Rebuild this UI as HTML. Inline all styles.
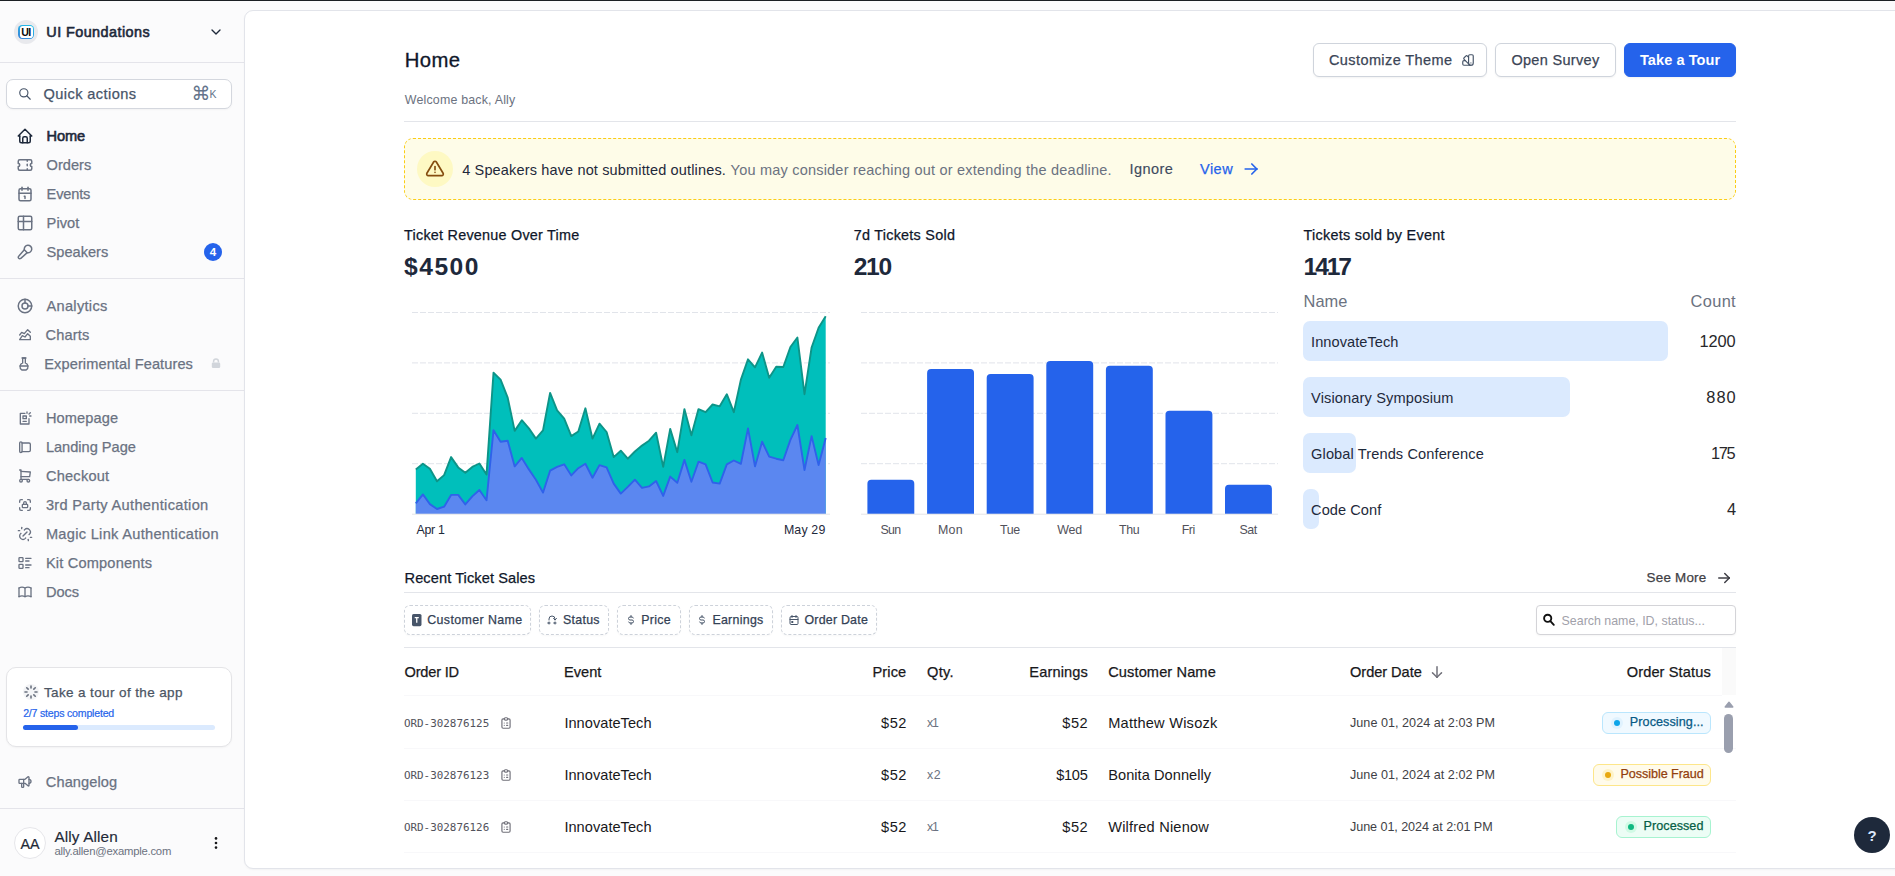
<!DOCTYPE html>
<html lang="en">
<head>
<meta charset="utf-8">
<title>Home · UI Foundations</title>
<style>
*{box-sizing:border-box;margin:0;padding:0}
html,body{width:1895px;height:876px;overflow:hidden}
body{position:relative;background:#fbfbfc;font-family:"Liberation Sans",Arial,sans-serif;color:#1e293b;font-size:14.5px;-webkit-font-smoothing:antialiased}
.topline{position:absolute;left:0;top:0;width:1895px;height:1px;background:#1b1f24;z-index:9}
.abs,.t{position:absolute;white-space:nowrap}
.t{line-height:20px;height:20px}
svg{display:block;overflow:visible}
.ico{position:absolute;fill:none;stroke:currentColor;stroke-linecap:round;stroke-linejoin:round}
/* sidebar */
.side{color:#64748b}
.hr{position:absolute;left:0;width:244px;height:1px;background:#e4e4ea}
.nav{font-size:14.6px;color:#6a7282;-webkit-text-stroke:0.25px currentColor}
.nav.on{color:#1e293b;-webkit-text-stroke:0.6px currentColor}
.card{position:absolute;left:244px;top:10px;width:1660px;height:859px;background:#fff;border:1px solid #e2e4ea;border-radius:9px 0 0 9px;box-shadow:0 1px 2px rgba(0,0,0,.04)}
.m{-webkit-text-stroke:0.25px currentColor}
.btn{position:absolute;top:43px;height:34px;border:1px solid #cfd4dc;border-radius:6px;background:#fff;box-shadow:0 1px 2px rgba(0,0,0,.05)}
.line{position:absolute;left:404px;width:1332px;height:1px;background:#e3e5ea}
.ax{font-size:12.4px;color:#1e293b}
.ax.g{color:#52525b}
.ev{left:1303px;height:40px;border-radius:7px;background:#dbeafe}
.en{left:1311.1px;font-size:14.6px;color:#1e293b}
.ec{font-size:16.4px;color:#27272a}
.chip{position:absolute;top:605px;height:30px;border:1px dashed #cdd2da;border-radius:6px;background:#fff;box-shadow:0 1px 2px rgba(0,0,0,.03)}
.ct{top:610px;font-size:12.4px;color:#334155}
.th{top:662px;font-size:14.6px;color:#18181b}
.oid{left:403.9px;font-family:"DejaVu Sans Mono","Liberation Mono",monospace;font-size:10.9px;color:#52525b}
.td{font-size:14.6px;color:#18181b}
.pr{font-size:14.6px}
.qt{left:927.1px;font-size:12.4px;color:#6b7280}
.dt{left:1350px;font-size:12.6px;color:#3f3f46}
.bdg{position:absolute;height:22px;border:1px solid;border-radius:6px}
.dot{width:6px;height:6px;border-radius:50%}
.halo{width:12px;height:12px;border-radius:50%}
.bt{font-size:12.6px;line-height:22px;height:22px}
</style>
</head>
<body>
<div class="topline"></div>
<aside class="side">
  <div class="abs" style="left:14px;top:20px;width:24px;height:24px;border-radius:50%;background:#e8e9ed"></div>
  <div class="abs" style="left:18.2px;top:24.8px;width:16px;height:14.4px;border-radius:4.2px;background:linear-gradient(205deg,#1fc4ea,#3a80d8)"></div>
  <div class="abs" style="left:19.7px;top:26.3px;width:13px;height:11.4px;border-radius:2.8px;background:#fff"></div>
  <div class="t" style="left:18.2px;top:22px;width:16px;text-align:center;font-size:10.6px;font-weight:700;color:#0a0a0a;letter-spacing:-0.6px;text-indent:-0.6px">UI</div>
  <div class="t" style="left:46.3px;top:22.1px;font-size:14.4px;color:#1e293b;-webkit-text-stroke:0.6px currentColor"><span style="letter-spacing:0.44px;margin-right:-0.44px">UI Foundations</span></div>
  <svg class="ico" style="left:208px;top:24px;color:#1e293b" width="16" height="16" viewBox="0 0 24 24" stroke-width="2"><path d="M6 9l6 6l6 -6"/></svg>
  <div class="hr" style="top:62px"></div>

  <div class="abs" style="left:6px;top:79px;width:226px;height:30px;border:1px solid #d4d7de;border-radius:7px;background:#fff;box-shadow:0 1px 2px rgba(0,0,0,.04)"></div>
  <svg class="ico" style="left:17.5px;top:86.8px;color:#475569" width="14" height="14" viewBox="0 0 24 24" stroke-width="2"><path d="M3 10a7 7 0 1 0 14 0a7 7 0 1 0 -14 0"/><path d="M21 21l-6 -6"/></svg>
  <div class="t m" style="left:43.6px;top:84px;font-size:14.6px;color:#475569"><span style="letter-spacing:0.4px;margin-right:-0.4px">Quick actions</span></div>
  <div class="t" style="left:191.5px;top:82.5px;font-size:19px;color:#64748b;font-family:'DejaVu Sans',sans-serif">⌘</div>
  <div class="t" style="left:209.6px;top:84px;font-size:10.5px;color:#64748b">K</div>

  <nav>

  <svg class="ico" style="left:16px;top:127px;color:#1e293b" width="18" height="18" viewBox="0 0 24 24" stroke-width="2"><path d="M5 12l-2 0l9 -9l9 9l-2 0"/><path d="M5 12v7a2 2 0 0 0 2 2h10a2 2 0 0 0 2 -2v-7"/><path d="M9 21v-6a2 2 0 0 1 2 -2h2a2 2 0 0 1 2 2v6"/></svg>
  <svg class="ico" style="left:16px;top:156px;color:#6a7282" width="18" height="18" viewBox="0 0 24 24" stroke-width="2"><path d="M15 5l0 2"/><path d="M15 11l0 2"/><path d="M15 17l0 2"/><path d="M5 5h14a2 2 0 0 1 2 2v3a2 2 0 0 0 0 4v3a2 2 0 0 1 -2 2h-14a2 2 0 0 1 -2 -2v-3a2 2 0 0 0 0 -4v-3a2 2 0 0 1 2 -2"/></svg>
  <svg class="ico" style="left:16px;top:185px;color:#6a7282" width="18" height="18" viewBox="0 0 24 24" stroke-width="2"><path d="M4 7a2 2 0 0 1 2 -2h12a2 2 0 0 1 2 2v12a2 2 0 0 1 -2 2h-12a2 2 0 0 1 -2 -2z"/><path d="M16 3v4"/><path d="M8 3v4"/><path d="M4 11h16"/><path d="M11 15h1v3"/></svg>
  <svg class="ico" style="left:16px;top:214px;color:#6a7282" width="18" height="18" viewBox="0 0 24 24" stroke-width="2"><path d="M3 5a2 2 0 0 1 2 -2h14a2 2 0 0 1 2 2v14a2 2 0 0 1 -2 2h-14a2 2 0 0 1 -2 -2v-14z"/><path d="M3 10h18"/><path d="M10 3v18"/></svg>
  <svg class="ico" style="left:16px;top:243px;color:#6a7282" width="18" height="18" viewBox="0 0 24 24" stroke-width="2"><path d="M15 12.9a5 5 0 1 0 -3.902 -3.9"/><path d="M15 12.9l-3.902 -3.899l-7.513 8.584a2 2 0 1 0 2.827 2.83l8.588 -7.515z"/></svg>
  <svg class="ico" style="left:16px;top:297px;color:#6a7282" width="18" height="18" viewBox="0 0 24 24" stroke-width="2"><path d="M12 3v5m4 4h5"/><path d="M8 12a4 4 0 1 0 8 0a4 4 0 1 0 -8 0"/><path d="M3 12a9 9 0 1 0 18 0a9 9 0 1 0 -18 0"/></svg>
  <svg class="ico" style="left:17px;top:327px;color:#6a7282" width="16" height="16" viewBox="0 0 24 24" stroke-width="2"><path d="M4 19l4 -6l4 2l4 -5l4 4l0 5l-16 0"/><path d="M4 12l3 -4l4 2l5 -6l4 4"/></svg>
  <svg class="ico" style="left:16px;top:356px;color:#6a7282" width="16" height="16" viewBox="0 0 24 24" stroke-width="2"><path d="M6.1 15h11.8"/><path d="M14 3v7.342a6 6 0 0 1 1.318 10.658h-6.635a6 6 0 0 1 1.317 -10.66v-7.34h4z"/><path d="M9 3h6"/></svg>
  <svg class="abs" style="left:211px;top:358.1px" width="10" height="11" viewBox="0 0 10 11"><path d="M2.6 4.6V3.3a2.4 2.4 0 0 1 4.8 0v1.3" fill="none" stroke="#d1d5db" stroke-width="1.5"/><rect x="0.8" y="4.4" width="8.4" height="5.6" rx="1.3" fill="#d1d5db"/></svg>
  <svg class="ico" style="left:17px;top:410px;color:#6a7282" width="16" height="16" viewBox="0 0 24 24" stroke-width="2"><path d="M11.933 5h-6.933v16h13v-8"/><path d="M14 17h-5"/><path d="M9 13h5v-4h-5z"/><path d="M15 5v-2"/><path d="M18 6l2 -2"/><path d="M19 9h2"/></svg>
  <svg class="ico" style="left:17px;top:439px;color:#6a7282" width="16" height="16" viewBox="0 0 24 24" stroke-width="2"><path d="M4 6a1.8 1.8 0 0 1 3.6 0v12.5a1.8 1.8 0 0 1 -3.6 0z"/><path d="M7.6 6h10.4a2 2 0 0 1 2 2v9a2 2 0 0 1 -2 2h-10.4"/></svg>
  <svg class="ico" style="left:17px;top:468px;color:#6a7282" width="16" height="16" viewBox="0 0 24 24" stroke-width="2"><path d="M4 19a2 2 0 1 0 4 0a2 2 0 1 0 -4 0"/><path d="M15 19a2 2 0 1 0 4 0a2 2 0 1 0 -4 0"/><path d="M17 17h-11v-14h-2"/><path d="M6 5l14 1l-1 7h-13"/></svg>
  <svg class="ico" style="left:17px;top:497px;color:#6a7282" width="16" height="16" viewBox="0 0 24 24" stroke-width="2"><path d="M4 8v-2a2 2 0 0 1 2 -2h2"/><path d="M4 16v2a2 2 0 0 0 2 2h2"/><path d="M16 4h2a2 2 0 0 1 2 2v2"/><path d="M16 20h2a2 2 0 0 0 2 -2v-2"/><path d="M8 12a1 1 0 0 1 1 -1h6a1 1 0 0 1 1 1v3a1 1 0 0 1 -1 1h-6a1 1 0 0 1 -1 -1z"/><path d="M10 11v-2a2 2 0 1 1 4 0v2"/></svg>
  <svg class="ico" style="left:17px;top:526px;color:#6a7282" width="16" height="16" viewBox="0 0 24 24" stroke-width="2"><path d="M17 22v-2"/><path d="M9 15l6 -6"/><path d="M11 6l.463 -.536a5 5 0 0 1 7.071 7.072l-.534 .464"/><path d="M13 18l-.397 .534a5.068 5.068 0 0 1 -7.127 0a4.972 4.972 0 0 1 0 -7.071l.524 -.463"/><path d="M20 17h2"/><path d="M2 7h2"/><path d="M7 2v2"/></svg>
  <svg class="ico" style="left:17px;top:555px;color:#6a7282" width="16" height="16" viewBox="0 0 24 24" stroke-width="2"><path d="M13 5h8"/><path d="M13 9h5"/><path d="M13 15h8"/><path d="M13 19h5"/><path d="M3 5a1 1 0 0 1 1 -1h4a1 1 0 0 1 1 1v4a1 1 0 0 1 -1 1h-4a1 1 0 0 1 -1 -1z"/><path d="M3 15a1 1 0 0 1 1 -1h4a1 1 0 0 1 1 1v4a1 1 0 0 1 -1 1h-4a1 1 0 0 1 -1 -1z"/></svg>
  <svg class="ico" style="left:17px;top:584px;color:#6a7282" width="16" height="16" viewBox="0 0 24 24" stroke-width="2"><path d="M3 19a9 9 0 0 1 9 0a9 9 0 0 1 9 0"/><path d="M3 6a9 9 0 0 1 9 0a9 9 0 0 1 9 0"/><path d="M3 6l0 13"/><path d="M12 6l0 13"/><path d="M21 6l0 13"/></svg>
  <div class="t nav on" style="left:46.6px;top:126px"><span style="letter-spacing:-0.15px;margin-right:0.15px">Home</span></div>
  <div class="t nav" style="left:46.6px;top:155px"><span style="letter-spacing:0.02px;margin-right:-0.02px">Orders</span></div>
  <div class="t nav" style="left:46.6px;top:184px"><span style="letter-spacing:-0.17px;margin-right:0.17px">Events</span></div>
  <div class="t nav" style="left:46.6px;top:213px"><span style="letter-spacing:0.06px;margin-right:-0.06px">Pivot</span></div>
  <div class="t nav" style="left:46.6px;top:242px"><span style="letter-spacing:-0.01px;margin-right:0.01px">Speakers</span></div>
  <div class="abs" style="left:204px;top:243px;width:18px;height:18px;border-radius:50%;background:#2563eb"></div>
  <div class="t" style="left:204px;top:242px;width:18px;text-align:center;font-size:11.5px;font-weight:700;color:#fff">4</div>
  <div class="hr" style="top:278px"></div>
  <div class="t nav" style="left:46.5px;top:296px"><span style="letter-spacing:0.3px;margin-right:-0.3px">Analytics</span></div>
  <div class="t nav" style="left:45.6px;top:325px"><span style="letter-spacing:0.12px;margin-right:-0.12px">Charts</span></div>
  <div class="t nav" style="left:44.3px;top:354px"><span style="letter-spacing:0.09px;margin-right:-0.09px">Experimental Features</span></div>
  <div class="hr" style="top:390px"></div>
  <div class="t nav" style="left:45.9px;top:408px"><span style="letter-spacing:0.11px;margin-right:-0.11px">Homepage</span></div>
  <div class="t nav" style="left:45.9px;top:437px"><span style="letter-spacing:-0.01px;margin-right:0.01px">Landing Page</span></div>
  <div class="t nav" style="left:45.9px;top:466px"><span style="letter-spacing:0.23px;margin-right:-0.23px">Checkout</span></div>
  <div class="t nav" style="left:45.9px;top:495px"><span style="letter-spacing:0.32px;margin-right:-0.32px">3rd Party Authentication</span></div>
  <div class="t nav" style="left:45.9px;top:524px"><span style="letter-spacing:0.3px;margin-right:-0.3px">Magic Link Authentication</span></div>
  <div class="t nav" style="left:45.9px;top:553px"><span style="letter-spacing:0.18px;margin-right:-0.18px">Kit Components</span></div>
  <div class="t nav" style="left:45.9px;top:582px"><span style="letter-spacing:-0.02px;margin-right:0.02px">Docs</span></div>
  </nav>

  <div class="abs" style="left:6px;top:667px;width:226px;height:80px;border:1px solid #e4e4e7;border-radius:10px;background:#fff;box-shadow:0 1px 2px rgba(0,0,0,.04)"></div>
  <div class="abs" style="left:22.5px;top:683.5px;width:16.5px;height:16.5px;border-radius:50%;background:#f3f4f6"></div>
  <svg class="ico" style="left:22.9px;top:683.8px;color:#6b7280" width="16" height="16" viewBox="0 0 24 24" stroke-width="2.4"><path d="M12 6l0 -3"/><path d="M16.25 7.75l2.15 -2.15"/><path d="M18 12l3 0"/><path d="M16.25 16.25l2.15 2.15"/><path d="M12 18l0 3"/><path d="M7.75 16.25l-2.15 2.15"/><path d="M6 12l-3 0"/><path d="M7.75 7.75l-2.15 -2.15"/></svg>
  <div class="t m" style="left:43.9px;top:682.8px;font-size:13.5px;color:#4b5563"><span style="letter-spacing:0.38px;margin-right:-0.38px">Take a tour of the app</span></div>
  <div class="t" style="left:23.2px;top:703px;font-size:10.6px;color:#2563eb;-webkit-text-stroke:0.2px #2563eb"><span style="letter-spacing:-0.21px;margin-right:0.21px">2/7 steps completed</span></div>
  <div class="abs" style="left:23px;top:725px;width:192px;height:5px;border-radius:3px;background:#dbeafe"></div>
  <div class="abs" style="left:23px;top:725px;width:55px;height:5px;border-radius:3px;background:#2563eb"></div>

  <svg class="ico" style="left:17px;top:774px;color:#6a7282" width="16" height="16" viewBox="0 0 24 24" stroke-width="2"><path d="M18 8a3 3 0 0 1 0 6"/><path d="M10 8v11a1 1 0 0 1 -1 1h-1a1 1 0 0 1 -1 -1v-5"/><path d="M12 8h0l4.524 -3.77a.9 .9 0 0 1 1.476 .692v12.156a.9 .9 0 0 1 -1.476 .692l-4.524 -3.77h-8a1 1 0 0 1 -1 -1v-4a1 1 0 0 1 1 -1h8"/></svg>
  <div class="t nav" style="left:45.8px;top:772px"><span style="letter-spacing:0.1px;margin-right:-0.1px">Changelog</span></div>
  <div class="hr" style="top:808px"></div>
  <div class="abs" style="left:14px;top:827px;width:32px;height:32px;border-radius:50%;border:1px solid #e6e6ea;background:#fff"></div>
  <div class="t" style="left:14px;top:833.7px;width:32px;text-align:center;font-size:14.3px;color:#1f2937;-webkit-text-stroke:0.2px #1f2937">AA</div>
  <div class="t" style="left:54.4px;top:827px;font-size:15.3px;color:#1f2937;-webkit-text-stroke:0.15px #1f2937"><span style="letter-spacing:0.14px;margin-right:-0.14px">Ally Allen</span></div>
  <div class="t" style="left:54.4px;top:841.3px;font-size:11.3px;color:#6b7280"><span style="letter-spacing:-0.23px;margin-right:0.23px">ally.allen@example.com</span></div>
  <svg class="abs" style="left:213px;top:836px" width="6" height="14" viewBox="0 0 6 14" fill="#18181b"><circle cx="3" cy="2.4" r="1.3"/><circle cx="3" cy="7" r="1.3"/><circle cx="3" cy="11.6" r="1.3"/></svg>
</aside>

<div class="card"></div>
<main>
<header>
  <h1 class="t" style="left:404.8px;top:45.6px;font-size:20.3px;font-weight:400;line-height:28px;height:28px;color:#0f172a;-webkit-text-stroke:0.3px currentColor"><span style="letter-spacing:0.36px;margin-right:-0.36px">Home</span></h1>
  <p class="t" style="left:404.8px;top:90px;font-size:12.4px;color:#6b7280"><span style="letter-spacing:0.19px;margin-right:-0.19px">Welcome back, Ally</span></p>
  <div class="btn" style="left:1313px;width:174px"></div>
  <div class="t m" style="left:1329px;top:50px;color:#3b4556"><span style="letter-spacing:0.4px;margin-right:-0.4px">Customize Theme</span></div>
  <svg class="ico" style="left:1461px;top:52.5px;color:#475569" width="14" height="14" viewBox="0 0 24 24" stroke-width="2"><path d="M19 3h-4a2 2 0 0 0 -2 2v12a4 4 0 0 0 8 0v-12a2 2 0 0 0 -2 -2"/><path d="M13 7.35l-2 -2a2 2 0 0 0 -2.828 0l-2.828 2.828a2 2 0 0 0 0 2.828l9 9"/><path d="M7.3 13h-2.3a2 2 0 0 0 -2 2v4a2 2 0 0 0 2 2h12"/><path d="M17 17l0 .01"/></svg>
  <div class="btn" style="left:1495px;width:121px"></div>
  <div class="t m" style="left:1511.4px;top:50px;color:#3b4556"><span style="letter-spacing:0.32px;margin-right:-0.32px">Open Survey</span></div>
  <div class="btn" style="left:1624px;width:112px;background:#2563eb;border-color:#2563eb"></div>
  <div class="t" style="left:1640px;top:50px;color:#fff;font-weight:700"><span style="letter-spacing:0.08px;margin-right:-0.08px">Take a Tour</span></div>
  <div class="line" style="top:121px"></div>
</header>
<section>
  <div class="abs" style="left:404px;top:138px;width:1332px;height:62px;border-radius:9px;background:#fefce8;border:1px dashed #facc15"></div>
  <div class="abs" style="left:417px;top:151px;width:36px;height:36px;border-radius:50%;background:#fef9c3"></div>
  <svg class="ico" style="left:425px;top:159px;color:#854d0e" width="20" height="20" viewBox="0 0 24 24" stroke-width="2"><path d="M12 9v4"/><path d="M10.363 3.591l-8.106 13.534a1.914 1.914 0 0 0 1.636 2.871h16.214a1.914 1.914 0 0 0 1.636 -2.87l-8.106 -13.536a1.914 1.914 0 0 0 -3.274 0z"/><path d="M12 16h.01"/></svg>
  <div class="t" style="left:462.2px;top:159.5px;color:#1e293b"><span style="letter-spacing:0.15px;margin-right:-0.15px">4 Speakers have not submitted outlines.</span></div>
  <div class="t" style="left:730.6px;top:159.5px;color:#6b7280"><span style="letter-spacing:0.21px;margin-right:-0.21px">You may consider reaching out or extending the deadline.</span></div>
  <div class="t" style="left:1129.5px;top:159px;color:#3f4b5e;-webkit-text-stroke:0.15px #3f4b5e"><span style="letter-spacing:0.42px;margin-right:-0.42px">Ignore</span></div>
  <div class="t m" style="left:1200px;top:159px;color:#2563eb"><span style="letter-spacing:0.48px;margin-right:-0.48px">View</span></div>
  <svg class="ico" style="left:1241.1px;top:159px;color:#2563eb" width="20" height="20" viewBox="0 0 24 24" stroke-width="2"><path d="M5 12l14 0"/><path d="M13 18l6 -6"/><path d="M13 6l6 6"/></svg>
</section>

<section>
  <h2 class="t m" style="left:404.1px;top:224.7px;font-weight:400;font-size:14.4px;color:#0f172a"><span style="letter-spacing:0.23px;margin-right:-0.23px">Ticket Revenue Over Time</span></h2>
  <div class="t" style="left:404.1px;top:251px;line-height:32px;height:32px;font-size:24.6px;font-weight:700;color:#1e293b"><span style="letter-spacing:1.48px;margin-right:-1.48px">$4500</span></div>
  <section>
<svg class="abs" style="left:404px;top:300px" width="440" height="225" viewBox="404 300 440 225">
<line x1="412" y1="312.5" x2="830" y2="312.5" stroke="#e1e4ea" stroke-width="1" stroke-dasharray="6 2"/>
<line x1="412" y1="362.9" x2="830" y2="362.9" stroke="#e1e4ea" stroke-width="1" stroke-dasharray="6 2"/>
<line x1="412" y1="413.3" x2="830" y2="413.3" stroke="#e1e4ea" stroke-width="1" stroke-dasharray="6 2"/>
<line x1="412" y1="463.7" x2="830" y2="463.7" stroke="#e1e4ea" stroke-width="1" stroke-dasharray="6 2"/>
<path d="M415.8 469.4 L422.9 463.8 L429.9 468.7 L437.0 481.3 L444.1 475.1 L451.1 457.1 L458.2 467.4 L465.3 472.8 L472.3 466.9 L479.4 463.5 L486.5 474.6 L493.5 372.7 L500.6 379.6 L507.7 397.6 L514.7 430.9 L521.8 420.2 L528.9 428.4 L535.9 438.6 L543.0 430.4 L550.1 392.9 L557.1 410.4 L564.2 418.6 L571.3 436.1 L578.3 431.5 L585.4 408.3 L592.5 438.6 L599.5 423.7 L606.6 432.0 L613.7 457.1 L620.8 450.7 L627.8 458.7 L634.9 451.5 L642.0 445.6 L649.0 440.7 L656.1 432.7 L663.2 466.9 L670.2 428.9 L677.3 452.2 L684.4 409.1 L691.4 435.3 L698.5 409.1 L705.6 412.2 L712.6 404.5 L719.7 406.3 L726.8 394.2 L733.8 412.2 L740.9 379.6 L748.0 359.3 L755.0 367.3 L762.1 352.6 L769.2 377.8 L776.2 366.8 L783.3 367.0 L790.4 347.0 L797.4 337.5 L804.5 394.2 L811.6 347.5 L818.6 327.7 L825.7 316.2 L825.7 514 L415.8 514 Z" fill="#00bfbb"/>
<path d="M415.8 469.4 L422.9 463.8 L429.9 468.7 L437.0 481.3 L444.1 475.1 L451.1 457.1 L458.2 467.4 L465.3 472.8 L472.3 466.9 L479.4 463.5 L486.5 474.6 L493.5 372.7 L500.6 379.6 L507.7 397.6 L514.7 430.9 L521.8 420.2 L528.9 428.4 L535.9 438.6 L543.0 430.4 L550.1 392.9 L557.1 410.4 L564.2 418.6 L571.3 436.1 L578.3 431.5 L585.4 408.3 L592.5 438.6 L599.5 423.7 L606.6 432.0 L613.7 457.1 L620.8 450.7 L627.8 458.7 L634.9 451.5 L642.0 445.6 L649.0 440.7 L656.1 432.7 L663.2 466.9 L670.2 428.9 L677.3 452.2 L684.4 409.1 L691.4 435.3 L698.5 409.1 L705.6 412.2 L712.6 404.5 L719.7 406.3 L726.8 394.2 L733.8 412.2 L740.9 379.6 L748.0 359.3 L755.0 367.3 L762.1 352.6 L769.2 377.8 L776.2 366.8 L783.3 367.0 L790.4 347.0 L797.4 337.5 L804.5 394.2 L811.6 347.5 L818.6 327.7 L825.7 316.2" fill="none" stroke="#0d9488" stroke-width="1.9" stroke-linejoin="round"/>
<path d="M415.8 503.3 L422.9 494.4 L429.9 504.1 L437.0 509.0 L444.1 506.7 L451.1 494.9 L458.2 494.9 L465.3 504.4 L472.3 496.4 L479.4 490.0 L486.5 500.3 L493.5 430.2 L500.6 441.7 L507.7 440.7 L514.7 466.4 L521.8 457.9 L528.9 469.4 L535.9 479.7 L543.0 492.6 L550.1 470.7 L557.1 466.9 L564.2 464.3 L571.3 475.4 L578.3 468.2 L585.4 463.8 L592.5 477.7 L599.5 465.1 L606.6 467.4 L613.7 483.6 L620.8 493.6 L627.8 486.9 L634.9 479.7 L642.0 487.9 L649.0 486.4 L656.1 481.0 L663.2 495.9 L670.2 476.6 L677.3 482.8 L684.4 459.9 L691.4 481.8 L698.5 461.7 L705.6 464.3 L712.6 482.5 L719.7 483.6 L726.8 464.3 L733.8 460.5 L740.9 463.8 L748.0 428.4 L755.0 466.4 L762.1 441.7 L769.2 456.6 L776.2 458.7 L783.3 460.2 L790.4 439.9 L797.4 425.0 L804.5 470.0 L811.6 436.1 L818.6 465.1 L825.7 438.1 L825.7 514 L415.8 514 Z" fill="#5b87f0"/>
<path d="M415.8 503.3 L422.9 494.4 L429.9 504.1 L437.0 509.0 L444.1 506.7 L451.1 494.9 L458.2 494.9 L465.3 504.4 L472.3 496.4 L479.4 490.0 L486.5 500.3 L493.5 430.2 L500.6 441.7 L507.7 440.7 L514.7 466.4 L521.8 457.9 L528.9 469.4 L535.9 479.7 L543.0 492.6 L550.1 470.7 L557.1 466.9 L564.2 464.3 L571.3 475.4 L578.3 468.2 L585.4 463.8 L592.5 477.7 L599.5 465.1 L606.6 467.4 L613.7 483.6 L620.8 493.6 L627.8 486.9 L634.9 479.7 L642.0 487.9 L649.0 486.4 L656.1 481.0 L663.2 495.9 L670.2 476.6 L677.3 482.8 L684.4 459.9 L691.4 481.8 L698.5 461.7 L705.6 464.3 L712.6 482.5 L719.7 483.6 L726.8 464.3 L733.8 460.5 L740.9 463.8 L748.0 428.4 L755.0 466.4 L762.1 441.7 L769.2 456.6 L776.2 458.7 L783.3 460.2 L790.4 439.9 L797.4 425.0 L804.5 470.0 L811.6 436.1 L818.6 465.1 L825.7 438.1" fill="none" stroke="#2f62ea" stroke-width="1.9" stroke-linejoin="round"/>
<line x1="412" y1="514.2" x2="830" y2="514.2" stroke="#e4e4e7" stroke-width="1"/>
</svg>
</section>
  <div class="t ax" style="left:416.4px;top:520px"><span style="letter-spacing:-0.28px;margin-right:0.28px">Apr 1</span></div>
  <div class="t ax" style="left:783.9px;top:520px"><span style="letter-spacing:0.15px;margin-right:-0.15px">May 29</span></div>
</section>
<section>
  <h2 class="t m" style="left:853.7px;top:224.7px;font-weight:400;font-size:14.4px;color:#0f172a"><span style="letter-spacing:0.26px;margin-right:-0.26px">7d Tickets Sold</span></h2>
  <div class="t" style="left:853.7px;top:251px;line-height:32px;height:32px;font-size:24.6px;font-weight:700;color:#1e293b"><span style="letter-spacing:-1.27px;margin-right:1.27px">210</span></div>
  <section>
<svg class="abs" style="left:853px;top:300px" width="440" height="225" viewBox="853 300 440 225">
<line x1="861" y1="312.5" x2="1278" y2="312.5" stroke="#e1e4ea" stroke-width="1" stroke-dasharray="6 2"/>
<line x1="861" y1="362.9" x2="1278" y2="362.9" stroke="#e1e4ea" stroke-width="1" stroke-dasharray="6 2"/>
<line x1="861" y1="413.3" x2="1278" y2="413.3" stroke="#e1e4ea" stroke-width="1" stroke-dasharray="6 2"/>
<line x1="861" y1="463.7" x2="1278" y2="463.7" stroke="#e1e4ea" stroke-width="1" stroke-dasharray="6 2"/>
<path d="M867.4 514 V483.8 a4 4 0 0 1 4 -4 h38.9 a4 4 0 0 1 4 4 V514 Z" fill="#2563eb"/>
<path d="M927.1 514 V372.9 a4 4 0 0 1 4 -4 h38.9 a4 4 0 0 1 4 4 V514 Z" fill="#2563eb"/>
<path d="M986.7 514 V377.9 a4 4 0 0 1 4 -4 h38.9 a4 4 0 0 1 4 4 V514 Z" fill="#2563eb"/>
<path d="M1046.3 514 V365.1 a4 4 0 0 1 4 -4 h38.9 a4 4 0 0 1 4 4 V514 Z" fill="#2563eb"/>
<path d="M1105.9 514 V369.7 a4 4 0 0 1 4 -4 h38.9 a4 4 0 0 1 4 4 V514 Z" fill="#2563eb"/>
<path d="M1165.5 514 V414.8 a4 4 0 0 1 4 -4 h38.9 a4 4 0 0 1 4 4 V514 Z" fill="#2563eb"/>
<path d="M1225.0 514 V488.8 a4 4 0 0 1 4 -4 h38.9 a4 4 0 0 1 4 4 V514 Z" fill="#2563eb"/>
<line x1="861" y1="514.2" x2="1278" y2="514.2" stroke="#e4e4e7" stroke-width="1"/>
</svg>
</section>
  <div class="t ax g" style="left:880.5px;top:520px"><span style="letter-spacing:-0.67px;margin-right:0.67px">Sun</span></div>
  <div class="t ax g" style="left:938.1px;top:520px"><span style="letter-spacing:0.2px;margin-right:-0.2px">Mon</span></div>
  <div class="t ax g" style="left:1000.1px;top:520px"><span style="letter-spacing:-0.4px;margin-right:0.4px">Tue</span></div>
  <div class="t ax g" style="left:1057.2px;top:520px"><span style="letter-spacing:-0.13px;margin-right:0.13px">Wed</span></div>
  <div class="t ax g" style="left:1118.9px;top:520px"><span style="letter-spacing:-0.33px;margin-right:0.33px">Thu</span></div>
  <div class="t ax g" style="left:1181.8px;top:520px"><span style="letter-spacing:-0.53px;margin-right:0.53px">Fri</span></div>
  <div class="t ax g" style="left:1239.4px;top:520px"><span style="letter-spacing:-0.4px;margin-right:0.4px">Sat</span></div>
</section>
<section>
  <h2 class="t m" style="left:1303.6px;top:224.7px;font-weight:400;font-size:14.4px;color:#0f172a"><span style="letter-spacing:0.27px;margin-right:-0.27px">Tickets sold by Event</span></h2>
  <div class="t" style="left:1303.6px;top:251px;line-height:32px;height:32px;font-size:24.6px;font-weight:700;color:#1e293b"><span style="letter-spacing:-2.1px">1417</span></div>
  <div class="t" style="left:1303.6px;top:291px;font-size:16.4px;color:#6b7280"><span style="letter-spacing:-0.01px;margin-right:0.01px">Name</span></div>
  <div class="t" style="left:1690.5px;top:291px;font-size:16.4px;color:#6b7280"><span style="letter-spacing:0.36px;margin-right:-0.36px">Count</span></div>
  <div class="abs ev" style="top:321px;width:365px"></div>
  <div class="abs ev" style="top:377px;width:267px"></div>
  <div class="abs ev" style="top:433px;width:53px"></div>
  <div class="abs ev" style="top:489px;width:16px"></div>
  <div class="t en" style="top:332px"><span style="letter-spacing:0.05px;margin-right:-0.05px">InnovateTech</span></div>
  <div class="t en" style="top:388px"><span style="letter-spacing:0.13px;margin-right:-0.13px">Visionary Symposium</span></div>
  <div class="t en" style="top:444px"><span style="letter-spacing:0.1px;margin-right:-0.1px">Global Trends Conference</span></div>
  <div class="t en" style="top:500px"><span style="letter-spacing:0.04px;margin-right:-0.04px">Code Conf</span></div>
  <div class="t ec" style="left:1699.6px;top:331.2px"><span style="letter-spacing:-0.12px;margin-right:0.12px">1200</span></div>
  <div class="t ec" style="left:1706.3px;top:387.2px"><span style="letter-spacing:1.02px;margin-right:-1.02px">880</span></div>
  <div class="t ec" style="left:1710.9px;top:443.2px"><span style="letter-spacing:-1.28px;margin-right:1.28px">175</span></div>
  <div class="t ec" style="left:1727px;top:499.2px">4</div>
</section>

<section>
  <h2 class="t m" style="left:404.5px;top:568px;font-weight:400;font-size:14.6px;color:#0f172a"><span style="letter-spacing:0.09px;margin-right:-0.09px">Recent Ticket Sales</span></h2>
  <div class="t m" style="left:1646.6px;top:567.5px;font-size:13.4px;color:#3f3f46"><span style="letter-spacing:0.23px;margin-right:-0.23px">See More</span></div>
  <svg class="ico" style="left:1715px;top:569px;color:#3f3f46" width="18" height="18" viewBox="0 0 24 24" stroke-width="2"><path d="M5 12l14 0"/><path d="M13 18l6 -6"/><path d="M13 6l6 6"/></svg>
  <div class="line" style="top:592px"></div>

  <div class="chip" style="left:404px;width:127px"></div>
  <svg class="abs" style="left:412.3px;top:613.9px" width="9.5" height="12.2" viewBox="0 0 9.5 12.2"><rect width="9.5" height="12.2" rx="1.6" fill="#475569"/><path d="M2.7 3.6h4.1M4.75 3.6v5.2" stroke="#fff" stroke-width="1.3" fill="none"/></svg>
  <div class="t m ct" style="left:427.2px"><span style="letter-spacing:0.4px;margin-right:-0.4px">Customer Name</span></div>
  <div class="chip" style="left:539px;width:70px"></div>
  <svg class="ico" style="left:546px;top:614px;color:#475569" width="12" height="12" viewBox="0 0 24 24" stroke-width="2"><path d="M4 18a2 2 0 1 0 4 0a2 2 0 1 0 -4 0"/><path d="M16 18a2 2 0 1 0 4 0a2 2 0 1 0 -4 0"/><path d="M6 12v-2a6 6 0 1 1 12 0v2"/><path d="M15 9l3 3l3 -3"/></svg>
  <div class="t m ct" style="left:563.1px"><span style="letter-spacing:0.25px;margin-right:-0.25px">Status</span></div>
  <div class="chip" style="left:617px;width:64px"></div>
  <svg class="ico" style="left:625px;top:614px;color:#475569" width="12" height="12" viewBox="0 0 24 24" stroke-width="2"><path d="M16.7 8a3 3 0 0 0 -2.7 -2h-4a3 3 0 0 0 0 6h4a3 3 0 0 1 0 6h-4a3 3 0 0 1 -2.7 -2"/><path d="M12 3v3m0 12v3"/></svg>
  <div class="t m ct" style="left:641.2px"><span style="letter-spacing:0.32px;margin-right:-0.32px">Price</span></div>
  <div class="chip" style="left:689px;width:84px"></div>
  <svg class="ico" style="left:696px;top:614px;color:#475569" width="12" height="12" viewBox="0 0 24 24" stroke-width="2"><path d="M16.7 8a3 3 0 0 0 -2.7 -2h-4a3 3 0 0 0 0 6h4a3 3 0 0 1 0 6h-4a3 3 0 0 1 -2.7 -2"/><path d="M12 3v3m0 12v3"/></svg>
  <div class="t m ct" style="left:712.4px"><span style="letter-spacing:0.28px;margin-right:-0.28px">Earnings</span></div>
  <div class="chip" style="left:781px;width:96px"></div>
  <svg class="ico" style="left:788px;top:614px;color:#475569" width="12" height="12" viewBox="0 0 24 24" stroke-width="2"><path d="M4 7a2 2 0 0 1 2 -2h12a2 2 0 0 1 2 2v12a2 2 0 0 1 -2 2h-12a2 2 0 0 1 -2 -2z"/><path d="M16 3v4"/><path d="M8 3v4"/><path d="M4 11h16"/><path d="M8 15h2v2h-2z"/></svg>
  <div class="t m ct" style="left:804.5px"><span style="letter-spacing:0.22px;margin-right:-0.22px">Order Date</span></div>

  <div class="abs" style="left:1536px;top:605px;width:200px;height:30px;border:1px solid #d4d4d8;border-radius:4px;background:#fff;box-shadow:0 1px 2px rgba(0,0,0,.04)"></div>
  <svg class="abs" style="left:1542px;top:613px" width="14" height="14" viewBox="1542 613 14 14" fill="none" stroke="#111" stroke-width="1.9" stroke-linecap="round"><circle cx="1547.7" cy="618.3" r="3.6"/><path d="M1550.4 621.2l3.4 3.6"/></svg>
  <div class="t" style="left:1561.6px;top:610.5px;font-size:12.4px;color:#a1a1aa">Search name, ID, status...</div>
  <div class="line" style="top:647px"></div>

  <div class="abs" style="left:1722px;top:648px;width:14px;height:47px;background:#fafafa"></div>
  <div class="t m th" style="left:404.5px"><span style="letter-spacing:-0.19px;margin-right:0.19px">Order ID</span></div>
  <div class="t m th" style="left:564.1px"><span style="letter-spacing:-0.03px;margin-right:0.03px">Event</span></div>
  <div class="t m th" style="left:872.5px"><span style="letter-spacing:0.11px;margin-right:-0.11px">Price</span></div>
  <div class="t m th" style="left:927.1px"><span style="letter-spacing:0.24px;margin-right:-0.24px">Qty.</span></div>
  <div class="t m th" style="left:1029.3px"><span style="letter-spacing:0.13px;margin-right:-0.13px">Earnings</span></div>
  <div class="t m th" style="left:1108.2px"><span style="letter-spacing:0.11px;margin-right:-0.11px">Customer Name</span></div>
  <div class="t m th" style="left:1350px"><span style="letter-spacing:-0.04px;margin-right:0.04px">Order Date</span></div>
  <svg class="ico" style="left:1428.4px;top:663px;color:#71717a" width="18" height="18" viewBox="0 0 24 24" stroke-width="2"><path d="M12 5l0 14"/><path d="M18 13l-6 6"/><path d="M6 13l6 6"/></svg>
  <div class="t m th" style="left:1626.7px"><span style="letter-spacing:0.12px;margin-right:-0.12px">Order Status</span></div>
  <div class="line" style="top:695px;background:#f8f8fa;width:1318px"></div>
  <div class="line" style="top:748px;background:#f8f8fa"></div>
  <div class="line" style="top:800px;background:#f8f8fa"></div>
  <div class="line" style="top:852px;background:#f8f8fa"></div>

  <div class="t oid" style="top:714px"><span style="letter-spacing:0.01px;margin-right:-0.01px">ORD-302876125</span></div>
  <div class="t oid" style="top:766px"><span style="letter-spacing:0.01px;margin-right:-0.01px">ORD-302876123</span></div>
  <div class="t oid" style="top:818px"><span style="letter-spacing:0.01px;margin-right:-0.01px">ORD-302876126</span></div>
  <svg class="ico" style="left:499px;top:716px;color:#71717a" width="14" height="14" viewBox="0 0 24 24" stroke-width="2"><path d="M9 5h-2a2 2 0 0 0 -2 2v12a2 2 0 0 0 2 2h10a2 2 0 0 0 2 -2v-12a2 2 0 0 0 -2 -2h-2"/><path d="M9 5a2 2 0 0 1 2 -2h2a2 2 0 0 1 2 2a2 2 0 0 1 -2 2h-2a2 2 0 0 1 -2 -2z"/><path d="M9 12h.01"/><path d="M13 12h2"/><path d="M9 16h.01"/><path d="M13 16h2"/></svg>
  <div class="t td" style="left:564.4px;top:713px"><span style="letter-spacing:0.03px;margin-right:-0.03px">InnovateTech</span></div>
  <svg class="ico" style="left:499px;top:768px;color:#71717a" width="14" height="14" viewBox="0 0 24 24" stroke-width="2"><path d="M9 5h-2a2 2 0 0 0 -2 2v12a2 2 0 0 0 2 2h10a2 2 0 0 0 2 -2v-12a2 2 0 0 0 -2 -2h-2"/><path d="M9 5a2 2 0 0 1 2 -2h2a2 2 0 0 1 2 2a2 2 0 0 1 -2 2h-2a2 2 0 0 1 -2 -2z"/><path d="M9 12h.01"/><path d="M13 12h2"/><path d="M9 16h.01"/><path d="M13 16h2"/></svg>
  <div class="t td" style="left:564.4px;top:765px"><span style="letter-spacing:0.03px;margin-right:-0.03px">InnovateTech</span></div>
  <svg class="ico" style="left:499px;top:820px;color:#71717a" width="14" height="14" viewBox="0 0 24 24" stroke-width="2"><path d="M9 5h-2a2 2 0 0 0 -2 2v12a2 2 0 0 0 2 2h10a2 2 0 0 0 2 -2v-12a2 2 0 0 0 -2 -2h-2"/><path d="M9 5a2 2 0 0 1 2 -2h2a2 2 0 0 1 2 2a2 2 0 0 1 -2 2h-2a2 2 0 0 1 -2 -2z"/><path d="M9 12h.01"/><path d="M13 12h2"/><path d="M9 16h.01"/><path d="M13 16h2"/></svg>
  <div class="t td" style="left:564.4px;top:817px"><span style="letter-spacing:0.03px;margin-right:-0.03px">InnovateTech</span></div>
  <div class="t td pr" style="left:881.1px;top:713px"><span style="letter-spacing:0.52px;margin-right:-0.52px">$52</span></div>
  <div class="t td pr" style="left:881.1px;top:765px"><span style="letter-spacing:0.52px;margin-right:-0.52px">$52</span></div>
  <div class="t td pr" style="left:881.1px;top:817px"><span style="letter-spacing:0.52px;margin-right:-0.52px">$52</span></div>
  <div class="t qt" style="top:713px"><span style="letter-spacing:-1.3px">x1</span></div>
  <div class="t qt" style="top:765px"><span style="letter-spacing:0.51px;margin-right:-0.51px">x2</span></div>
  <div class="t qt" style="top:817px"><span style="letter-spacing:-1.3px">x1</span></div>
  <div class="t td pr" style="left:1062.3px;top:713px"><span style="letter-spacing:0.52px;margin-right:-0.52px">$52</span></div>
  <div class="t td pr" style="left:1056.2px;top:765px"><span style="letter-spacing:-0.29px;margin-right:0.29px">$105</span></div>
  <div class="t td pr" style="left:1062.3px;top:817px"><span style="letter-spacing:0.52px;margin-right:-0.52px">$52</span></div>
  <div class="t td" style="left:1108.2px;top:713px"><span style="letter-spacing:0.22px;margin-right:-0.22px">Matthew Wisozk</span></div>
  <div class="t td" style="left:1108.2px;top:765px"><span style="letter-spacing:0.05px;margin-right:-0.05px">Bonita Donnelly</span></div>
  <div class="t td" style="left:1108.2px;top:817px"><span style="letter-spacing:0.19px;margin-right:-0.19px">Wilfred Nienow</span></div>
  <div class="t dt" style="top:713px"><span style="letter-spacing:0.03px;margin-right:-0.03px">June 01, 2024 at 2:03 PM</span></div>
  <div class="t dt" style="top:765px"><span style="letter-spacing:0.03px;margin-right:-0.03px">June 01, 2024 at 2:02 PM</span></div>
  <div class="t dt" style="top:817px"><span style="letter-spacing:-0.07px;margin-right:0.07px">June 01, 2024 at 2:01 PM</span></div>

  <div class="bdg" style="left:1602px;top:712px;width:109px;background:#f0f9ff;border-color:#bae6fd"></div>
  <div class="abs halo" style="left:1611px;top:717px;background:#e0f2fe"></div>
  <div class="abs dot" style="left:1614px;top:720px;background:#0ea5e9"></div>
  <div class="t m bt" style="left:1629.8px;top:711.3px;color:#075985"><span style="letter-spacing:0.08px;margin-right:-0.08px">Processing...</span></div>
  <div class="bdg" style="left:1593px;top:764px;width:118px;background:#fffbeb;border-color:#fde68a"></div>
  <div class="abs halo" style="left:1602px;top:769px;background:#fef3c7"></div>
  <div class="abs dot" style="left:1605px;top:772px;background:#e8a80f"></div>
  <div class="t m bt" style="left:1620.5px;top:763.3px;color:#92400e"><span style="letter-spacing:-0.06px;margin-right:0.06px">Possible Fraud</span></div>
  <div class="bdg" style="left:1616px;top:816px;width:95px;background:#ecfdf5;border-color:#a7f3d0"></div>
  <div class="abs halo" style="left:1625px;top:821px;background:#d1fae5"></div>
  <div class="abs dot" style="left:1628px;top:824px;background:#10b981"></div>
  <div class="t m bt" style="left:1643.6px;top:815.3px;color:#065f46"><span style="letter-spacing:0.04px;margin-right:-0.04px">Processed</span></div>

  <svg class="abs" style="left:1724px;top:701px" width="10" height="7" viewBox="0 0 10 7"><path d="M5 1.2 8.8 6H1.2Z" fill="#9a9fae" stroke="#9a9fae" stroke-width="1.4" stroke-linejoin="round"/></svg>
  <div class="abs" style="left:1724px;top:714px;width:9px;height:39px;border-radius:4.5px;background:#9a9fae"></div>
</section>
<div class="abs" style="left:1854px;top:817px;width:36px;height:36px;border-radius:50%;background:#1e293b"></div>
<div class="t" style="left:1854px;top:825.6px;width:36px;text-align:center;font-size:15px;font-weight:700;color:#dbe7fb">?</div>

</main>
</body>
</html>
